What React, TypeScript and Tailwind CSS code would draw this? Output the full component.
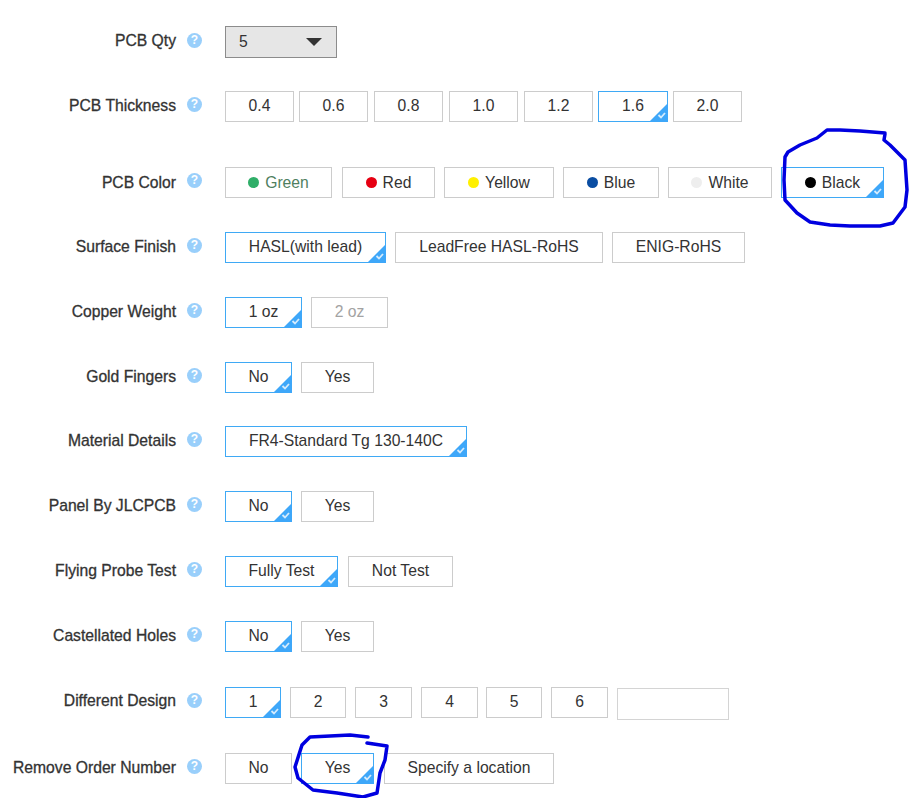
const rowClass = 'flex items-center'

type Opt = {
  label: string
  cls: string
  active?: boolean
  disabled?: boolean
  dot?: string
  textCls?: string
}

function Corner() {
  return (
    <svg className="absolute right-[-1px] bottom-[-1px]" width="19" height="19" viewBox="0 0 19 19">
      <polygon points="19,0 19,19 0,19" fill="#3ea7f9" />
      <path d="M9.5 12 L12 14.5 L16 10" fill="none" stroke="#d4ebfd" strokeWidth="1.8" />
    </svg>
  )
}

function Help() {
  return (
    <span className="w-[15px] h-[15px] ml-[11px] mt-[-4px] shrink-0 rounded-full bg-[#99cffb] text-white text-[12px] leading-[15px] font-bold text-center">
      ?
    </span>
  )
}

function Option({ opt }: { opt: Opt }) {
  return (
    <div
      className={`relative h-[31px] shrink-0 border flex items-center justify-center text-[15.7px] ${opt.dot ? '' : 'pb-[2px]'} ${opt.cls} ${
        opt.active ? 'border-[#3fa9f5]' : 'border-[#cccccc]'
      } ${opt.disabled ? 'text-[#a3a3a3]' : opt.textCls || 'text-[#333333]'}`}
    >
      {opt.dot && <span className={`w-[11px] h-[11px] rounded-full mr-[6px] ${opt.dot}`} />}
      {opt.label}
      {opt.active && <Corner />}
    </div>
  )
}

function Label({ text, cls }: { text: string; cls: string }) {
  return (
    <div className={`w-[176px] shrink-0 text-right text-[15.7px] font-medium text-[#333333] [-webkit-text-stroke:0.3px_#333333] whitespace-nowrap ${cls}`}>
      {text}
    </div>
  )
}

function Row({ label, mt, labelCls, children }: { label: string; mt: string; labelCls?: string; children: React.ReactNode }) {
  return (
    <div className={`${rowClass} ${mt}`}>
      <Label text={label} cls={labelCls || 'mt-[-2px]'} />
      <Help />
      <div className="flex items-center ml-[23px]">{children}</div>
    </div>
  )
}

const rows: { label: string; mt: string; labelCls?: string; opts: Opt[] }[] = [
  {
    label: 'PCB Thickness',
    mt: 'mt-[33px]',
    opts: [
      { label: '0.4', cls: 'w-[69px] mr-[5px]' },
      { label: '0.6', cls: 'w-[69px] mr-[6px]' },
      { label: '0.8', cls: 'w-[69px] mr-[6px]' },
      { label: '1.0', cls: 'w-[69px] mr-[6px]' },
      { label: '1.2', cls: 'w-[69px] mr-[5px]' },
      { label: '1.6', cls: 'w-[70px] mr-[5px]', active: true },
      { label: '2.0', cls: 'w-[69px]' },
    ],
  },
  {
    label: 'PCB Color',
    mt: 'mt-[45px]',
    labelCls: 'mt-0',
    opts: [
      { label: 'Green', cls: 'w-[107px] mr-[10px]', dot: 'bg-[#2fae68]', textCls: 'text-[#4f7f5f]' },
      { label: 'Red', cls: 'w-[93px] mr-[9px]', dot: 'bg-[#e60012]' },
      { label: 'Yellow', cls: 'w-[110px] mr-[9px]', dot: 'bg-[#fff000]' },
      { label: 'Blue', cls: 'w-[96px] mr-[9px]', dot: 'bg-[#0a4da2]' },
      { label: 'White', cls: 'w-[104px] mr-[9px]', dot: 'bg-[#eeeeee]' },
      { label: 'Black', cls: 'w-[103px]', dot: 'bg-black', active: true },
    ],
  },
  {
    label: 'Surface Finish',
    mt: 'mt-[34px]',
    opts: [
      { label: 'HASL(with lead)', cls: 'w-[161px] mr-[9px]', active: true },
      { label: 'LeadFree HASL-RoHS', cls: 'w-[208px] mr-[9px]' },
      { label: 'ENIG-RoHS', cls: 'w-[133px]' },
    ],
  },
  {
    label: 'Copper Weight',
    mt: 'mt-[34px]',
    opts: [
      { label: '1 oz', cls: 'w-[77px] mr-[9px]', active: true },
      { label: '2 oz', cls: 'w-[77px]', disabled: true },
    ],
  },
  {
    label: 'Gold Fingers',
    mt: 'mt-[34px]',
    opts: [
      { label: 'No', cls: 'w-[67px] mr-[9px]', active: true },
      { label: 'Yes', cls: 'w-[73px]' },
    ],
  },
  {
    label: 'Material Details',
    mt: 'mt-[33px]',
    opts: [{ label: 'FR4-Standard Tg 130-140C', cls: 'w-[242px]', active: true }],
  },
  {
    label: 'Panel By JLCPCB',
    mt: 'mt-[34px]',
    opts: [
      { label: 'No', cls: 'w-[67px] mr-[9px]', active: true },
      { label: 'Yes', cls: 'w-[73px]' },
    ],
  },
  {
    label: 'Flying Probe Test',
    mt: 'mt-[34px]',
    opts: [
      { label: 'Fully Test', cls: 'w-[113px] mr-[10px]', active: true },
      { label: 'Not Test', cls: 'w-[105px]' },
    ],
  },
  {
    label: 'Castellated Holes',
    mt: 'mt-[34px]',
    opts: [
      { label: 'No', cls: 'w-[67px] mr-[9px]', active: true },
      { label: 'Yes', cls: 'w-[73px]' },
    ],
  },
  {
    label: 'Different Design',
    mt: 'mt-[35px]',
    labelCls: 'mt-[-4px]',
    opts: [
      { label: '1', cls: 'w-[56px] mr-[9px]', active: true },
      { label: '2', cls: 'w-[56px] mr-[9px]' },
      { label: '3', cls: 'w-[57px] mr-[9px]' },
      { label: '4', cls: 'w-[57px] mr-[8px]' },
      { label: '5', cls: 'w-[56px] mr-[9px]' },
      { label: '6', cls: 'w-[57px] mr-[9px]' },
    ],
  },
  {
    label: 'Remove Order Number',
    mt: 'mt-[35px]',
    opts: [
      { label: 'No', cls: 'w-[67px] mr-[9px]' },
      { label: 'Yes', cls: 'w-[73px] mr-[10px]', active: true },
      { label: 'Specify a location', cls: 'w-[170px]' },
    ],
  },
]

export default function App() {
  return (
    <div className="relative w-[914px] h-[798px] overflow-hidden bg-white pt-[26px] font-['Liberation_Sans',Arial,sans-serif]">
      <div className={rowClass}>
        <Label text="PCB Qty" cls="mt-[-2px]" />
        <Help />
        <div className="ml-[23px] w-[112px] h-[32px] bg-[#e6e6e6] border border-[#8c8c8c] flex items-center justify-between pl-[13px] pr-[14px] text-[15.7px] text-[#333333]">
          5
          <span className="w-0 h-0 border-x-[8px] border-x-transparent border-t-[8px] border-t-[#333333]" />
        </div>
      </div>
      {rows.map((row) => (
        <Row key={row.label} label={row.label} mt={row.mt} labelCls={row.labelCls}>
          {row.opts.map((opt) => (
            <Option key={opt.label} opt={opt} />
          ))}
          {row.label === 'Different Design' && (
            <input className="w-[112px] h-[32px] mt-[1px] mb-[-2px] border border-[#d4d4d4] bg-white" />
          )}
        </Row>
      ))}

      {/* hand drawn circles on top of the screenshot */}
      <svg className="absolute left-0 top-0 pointer-events-none" width="914" height="798" fill="none" stroke="#0000e0" strokeWidth="3.5" strokeLinejoin="round" strokeLinecap="round">
        <path d="M885 133 L860 131 L840 130 L827 130 L817 138 L800 145 L788 152 L785 157 L784 180 L785 200 L797 213 L810 222 L830 225 L850 226 L880 226 L893 223 L905 207 L907 190 L905 160 L890 145 L884 140 L885 134" />
        <path d="M368 737 L350 735 L310 737 L302 745 L295 767 L298 778 L313 790 L337 793 L363 797 L377 793 L380 773 L385 760 L387 746 L367 743" />
      </svg>
    </div>
  )
}
